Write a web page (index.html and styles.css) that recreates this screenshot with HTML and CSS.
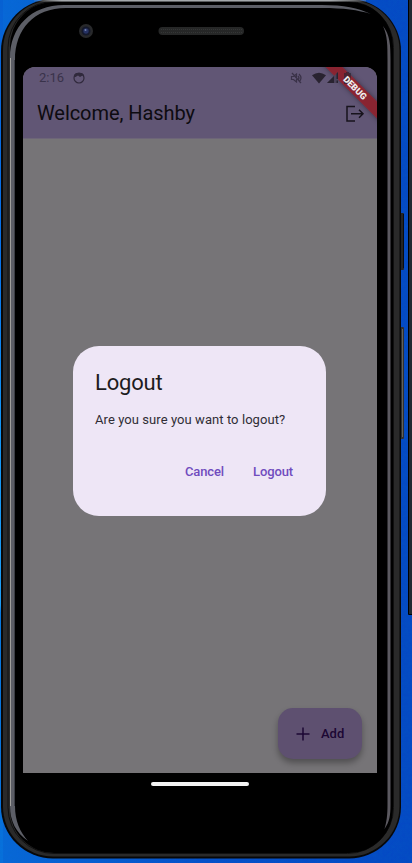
FILE: index.html
```
<!DOCTYPE html>
<html lang="en">
<head>
<meta charset="utf-8">
<title>Welcome</title>
<link rel="stylesheet" href="styles.css">
</head>
<body>
<div class="desktop">
  <svg class="shell" width="412" height="863" viewBox="0 0 412 863" fill="none">
    <defs>
      <linearGradient id="edge" x1="0" x2="412" y1="0" y2="0" gradientUnits="userSpaceOnUse">
        <stop offset=".07" stop-color="#a4a8ab" stop-opacity="0"/>
        <stop offset=".15" stop-color="#a4a8ab"/>
        <stop offset=".8" stop-color="#a4a8ab"/>
        <stop offset=".93" stop-color="#a4a8ab" stop-opacity="0"/>
      </linearGradient>
      <filter id="grain" x="0" y="0" width="100%" height="100%">
        <feTurbulence type="fractalNoise" baseFrequency=".35" numOctaves="2"/>
        <feColorMatrix values="0 0 0 0 0  0 0 0 0 .15  0 0 0 0 .5  .5 0 0 0 -.12"/>
      </filter>
    </defs>
    <rect width="412" height="863" filter="url(#grain)" opacity=".5"/>
    <path d="M409 0h3v614h-3z" fill="#202a31"/>
    <path d="M408.500 0v614.500h3.500" stroke="#000"/>
    <rect x="399" y="213" width="5" height="57" rx="1" fill="#242424"/>
    <path d="M403.500 214v54" stroke="#0c0c0c"/>
    <rect x="399" y="327" width="5" height="112" rx="1" fill="#303030"/>
    <path d="M402.500 329v108" stroke="#62625e"/>
    <rect x="1" y="-1" width="400" height="859.500" rx="52" fill="#080808"/>
    <rect x="3" y="0" width="396.500" height="856.500" rx="50" fill="#2a2a2a"/>
    <rect x="8" y="1.500" width="385.500" height="852" rx="46" stroke="#101010"/>
    <path d="M34 .5h332" stroke="url(#edge)" stroke-width="2"/>
    <rect x="10" y="2" width="383" height="851" rx="44" fill="#000"/>
    <path d="M10 58C10 27 31 5 64 5h258c22 0 36 3 49 9-13-4-27-6-49-6H66C34 8 15 29 15 60v746c0 15 5 26 13 35-12-8-18-20-18-35z" fill="#5c5e66"/>
    <path d="M10.500 806V58" stroke="#a09f9c"/>
    <path d="M14.500 806V60" stroke="#3c3e45"/>
    <path d="M383 26c7 9 7.500 19 7.500 34v745c0 10-1 17-6 24 2-7 3-14 3-24V60c0-15 0-24-4.500-34z" fill="#5b5960"/>
    <rect x="158.500" y="27" width="85.500" height="8" rx="4" fill="#262727"/>
    <path d="M161 29.500h81M161 32.500h81" stroke="#343636" stroke-dasharray="1 1"/>
    <circle cx="86" cy="31" r="7" fill="#28292b"/>
    <circle cx="86" cy="31" r="4.500" fill="#14182b"/>
    <circle cx="86" cy="31" r="2.700" fill="#263263"/>
    <circle cx="85.500" cy="30" r="1" fill="#7280ad"/>
  </svg>

  <main class="screen">
    <header class="top">
      <div class="status">
        <span class="time">2:16</span>
        <svg class="face" width="12" height="12" viewBox="0 0 12 12" fill="none">
          <circle cx="6" cy="6" r="5" stroke="#30293c" stroke-width="1.200"/>
          <path d="M1 5V3l2-2h6l2 2v2L9.500 3.500 7 5 5 3.500 2.500 5z" fill="#30293c"/>
        </svg>
        <svg class="signals" width="64" height="14" viewBox="0 0 64 14" fill="#292330">
          <path d="M1.500 5.500h2l3-2.500v8l-3-2.500h-2zM8 5q2 2 0 4M9 3q4 4 0 8M2 2l9 10" fill="none" stroke="#3a3248" stroke-width="1.200"/>
          <path d="M22 4.200q7-5 14 0L29 12.500z"/>
          <path d="M48 1v11H37z" fill="#4b425a"/>
          <path d="M44 5v7h-7zM46.500 2.500 48 1v7h-1.500zM46.500 9.500H48V12h-1.500z"/>
          <path d="M54 2h2V1h3v1h2v11h-7z" opacity=".65"/>
        </svg>
      </div>
      <div class="appbar">
        <h1>Welcome, Hashby</h1>
        <svg width="20" height="18" viewBox="0 0 20 18" fill="none" stroke="#17131c" stroke-width="1.500">
          <path d="M10 1.500H2v14.500h8M6 8.800h12M14 4.800l4 4-4 4"/>
        </svg>
      </div>
      <div class="debug ribbon"></div>
      <div class="debug label">DEBUG</div>
    </header>
    <section class="content">
      <div class="dialog" role="dialog">
        <h2>Logout</h2>
        <p>Are you sure you want to logout?</p>
        <div class="actions"><button>Cancel</button><button>Logout</button></div>
      </div>
      <button class="fab">
        <svg width="14" height="14" viewBox="0 0 14 14" stroke="#1c0733" stroke-width="1.500"><path d="M7 .5v13M.5 7h13"/></svg>
        <span>Add</span>
      </button>
    </section>
  </main>
  <div class="homebar"></div>
</div>
</body>
</html>
```
FILE: styles.css
```
* { box-sizing: border-box; }
body { margin: 0; font-family: Roboto, sans-serif; }
button { border: 0; padding: 0; background: none; font: inherit; }
h1, h2, p { margin: 0; font-weight: 400; }
.desktop {
  position: relative;
  width: 412px;
  height: 863px;
  overflow: hidden;
  padding: 67px 35px 0 23px;
  background:
    linear-gradient(#0860d4, #0872ee 30%, #1498f8 50%, #20a0f8 70%, #0878e0 71%, #0870dc) 0 0 / 3px 100% no-repeat,
    linear-gradient(90deg, #0868d8, #0650ca 50%, #0549c4);
}
.shell { position: absolute; left: 0; top: 0; }
.screen {
  position: relative;
  height: 706px;
  display: flex;
  flex-direction: column;
  overflow: hidden;
  border-radius: 12px 12px 0 0;
  background: #767477;
}
.top { position: relative; height: 72px; background: #615675; border-bottom: 1px solid #6d6578; }
.status { position: relative; z-index: 1; display: flex; align-items: center; height: 22px; padding: 0 23px 0 16px; }
.time { font-size: 13px; line-height: 22px; color: #39324a; }
.face { margin-left: 9px; }
.signals { margin-left: auto; }
.appbar { display: flex; align-items: center; justify-content: space-between; height: 49px; padding: 0 12px 0 14px; }
.appbar h1 { font-size: 20px; line-height: 26px; color: #0d0b10; margin-top: -2px; letter-spacing: -.07px; }
.debug {
  position: absolute;
  right: -33px;
  top: 15px;
  width: 110px;
  height: 12px;
  transform: rotate(45deg);
}
.ribbon { background: rgba(145, 27, 38, .85); box-shadow: 0 0 5px rgba(0, 0, 0, .4); }
.label {
  z-index: 2;
  color: #eee;
  font-size: 9px;
  font-weight: 900;
  line-height: 12px;
  text-align: center;
}
.content { flex: 1; display: flex; flex-direction: column; padding: 207px 15px 14px 50px; }
.dialog {
  width: 253px;
  height: 170px;
  padding: 22px 22px 0;
  border-radius: 26px;
  background: #eee6f6;
}
.dialog h2 { font-size: 22px; line-height: 29px; color: #1d1b20; letter-spacing: -.2px; }
.dialog p { margin-top: 13px; font-size: 13px; line-height: 19px; color: #302d35; letter-spacing: .07px; }
.actions { display: flex; justify-content: flex-end; gap: 29px; margin-top: 33px; padding-right: 11px; }
.actions button { font-size: 13px; font-weight: 500; line-height: 20px; color: #704cbe; letter-spacing: -.12px; }
.fab {
  display: flex;
  align-items: center;
  align-self: flex-end;
  gap: 11px;
  width: 84px;
  height: 51px;
  margin-top: auto;
  padding-left: 18px;
  border-radius: 15px;
  background: #5e5070;
  box-shadow: 0 4px 6px rgba(0, 0, 0, .32);
  color: #1c0733;
  font-size: 13px;
  font-weight: 500;
}
.homebar { position: relative; width: 98px; height: 4px; margin: 9px auto 0 128px; border-radius: 2px; background: #f3f3f3; }
```
